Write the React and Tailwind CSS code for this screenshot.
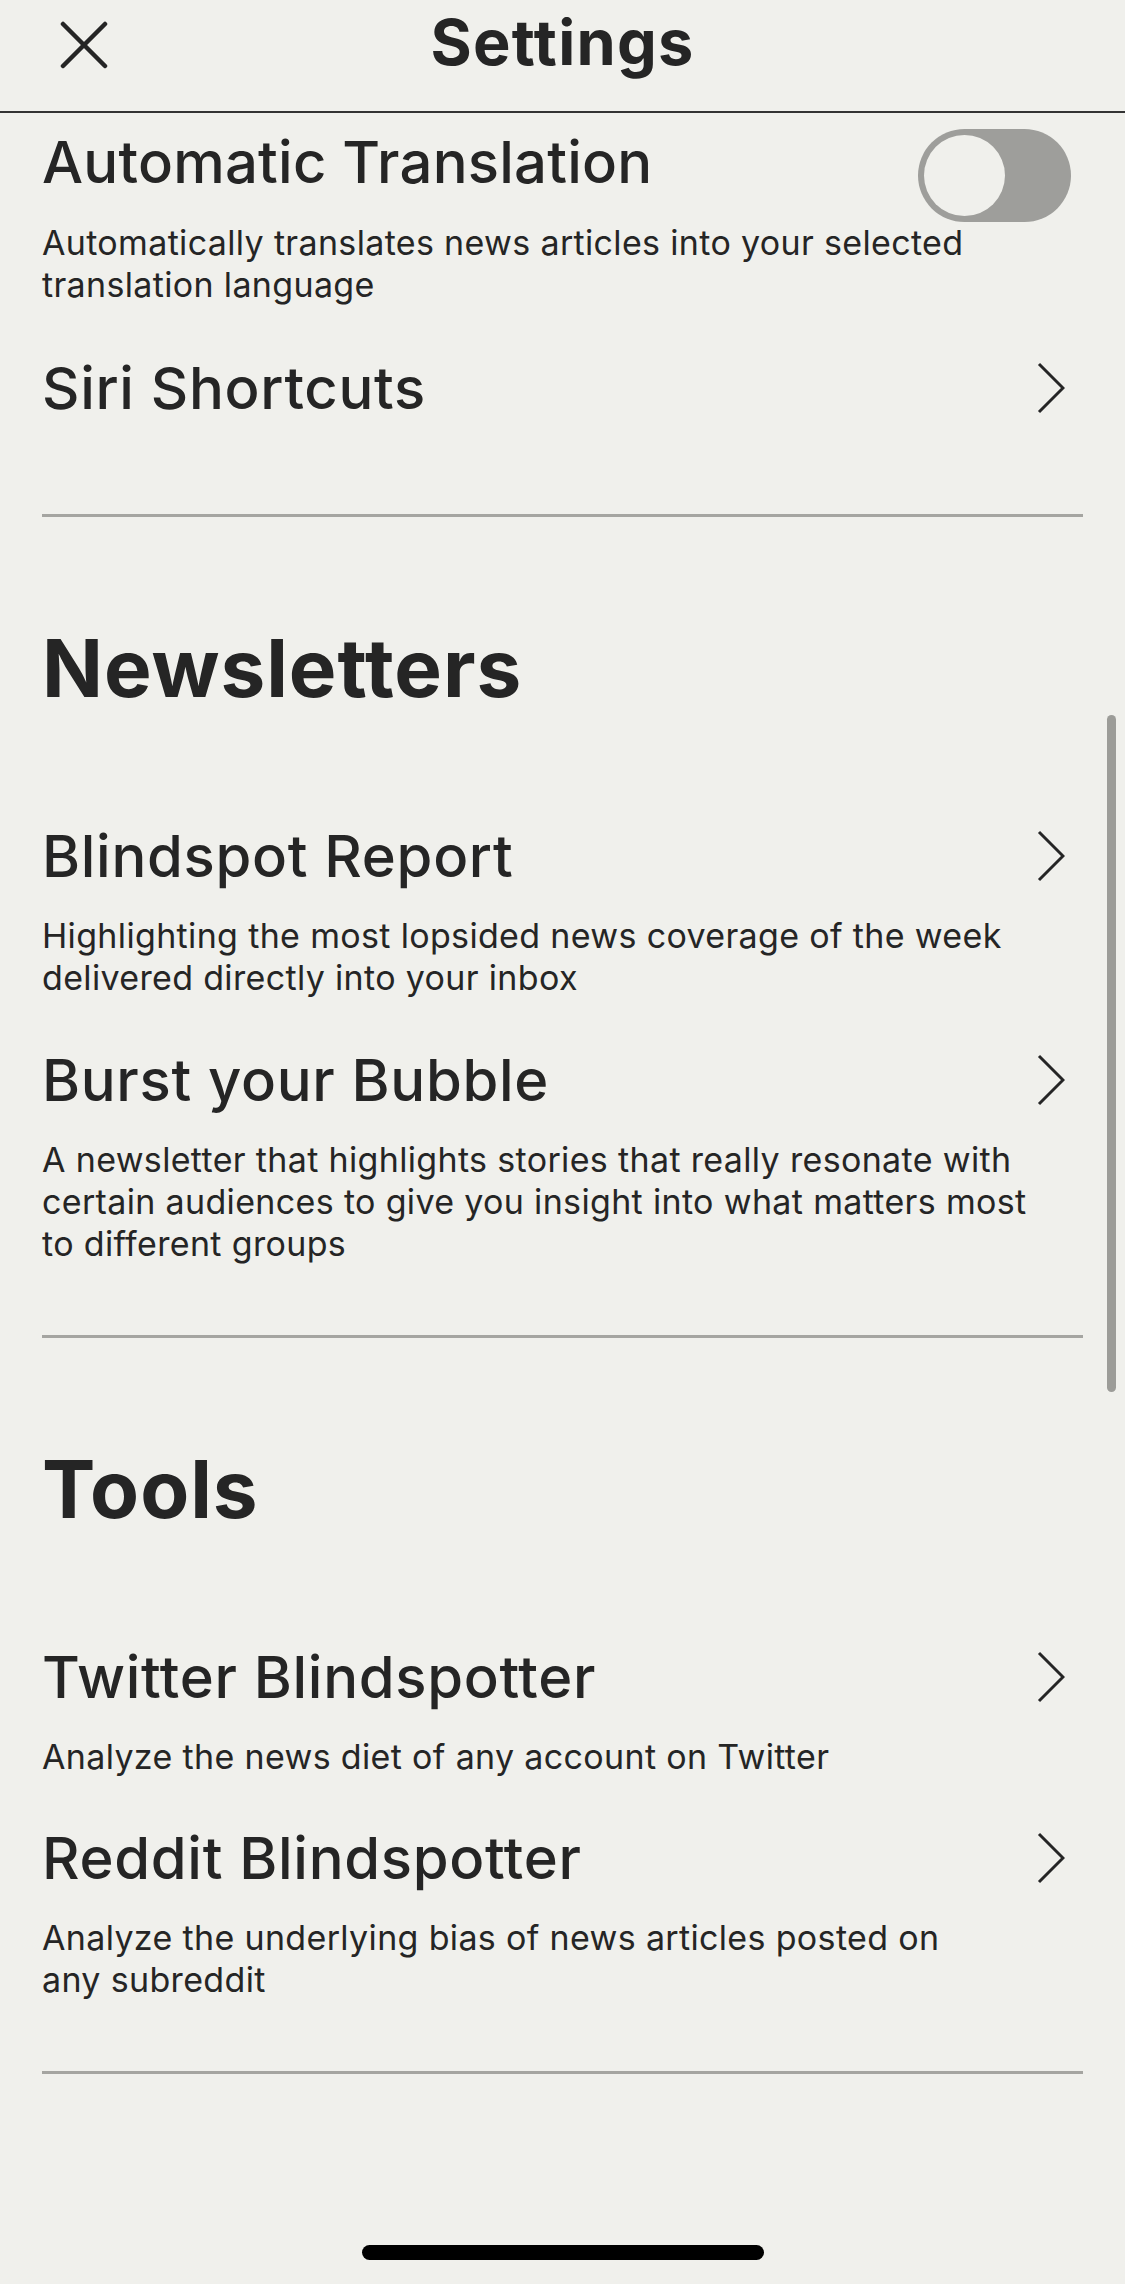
const font = { fontFamily: "Inter, 'Liberation Sans', sans-serif" }

function Chevron() {
  return (
    <svg width="28" height="52" viewBox="0 0 28 52" fill="none" className="mr-[18px] shrink-0">
      <polyline points="2,2 26,26 2,50" stroke="#252525" strokeWidth="3" strokeLinejoin="miter" />
    </svg>
  )
}

function CloseIcon() {
  return (
    <svg width="48" height="48" viewBox="0 0 48 48" fill="none">
      <line x1="3" y1="3" x2="45" y2="45" stroke="#252525" strokeWidth="4.5" strokeLinecap="round" />
      <line x1="45" y1="3" x2="3" y2="45" stroke="#252525" strokeWidth="4.5" strokeLinecap="round" />
    </svg>
  )
}

function Toggle() {
  return (
    <div className="mt-[2px] mr-[12px] w-[153px] h-[93px] rounded-full bg-[#9e9e9b] p-[6px] shrink-0">
      <div className="w-[81px] h-[81px] rounded-full bg-[#f0f0ec]" />
    </div>
  )
}

function Row({ title, lines, first, gap = "mt-[46px]" }) {
  return (
    <div className={first ? "mt-[105px]" : gap}>
      <div className="flex items-center justify-between">
        <h3 className="text-[58px] leading-[70px] font-medium tracking-[0.012em] text-[#252525]">{title}</h3>
        <Chevron />
      </div>
      {lines && (
        <p className="mt-[24px] text-[34px] leading-[42px] tracking-[0.01em] text-[#252525]">
          {lines.map((l) => (
            <span key={l} className="block whitespace-nowrap">
              {l}
            </span>
          ))}
        </p>
      )}
    </div>
  )
}

function Divider({ className }) {
  return <div className={"h-[3px] bg-[#a5a5a1] " + className} />
}

export default function App() {
  return (
    <div className="relative h-[2284px] overflow-hidden bg-[#f0f0ec] text-[#252525]" style={font}>
      <header className="grid grid-cols-[1fr_auto_1fr] h-[113px] border-b-2 border-[#333333]">
        <div className="pl-[60px] pt-[21px]">
          <CloseIcon />
        </div>
        <h1 className="pt-[11px] text-[63px] leading-[63px] font-bold tracking-[0.02em]">Settings</h1>
        <div />
      </header>

      <main className="px-[42px] pt-[14px]">
        <div className="flex items-start justify-between">
          <h3 className="text-[58px] leading-[70px] font-medium tracking-[0.004em]">Automatic Translation</h3>
          <Toggle />
        </div>
        <p className="text-[34px] leading-[42px] tracking-[0.01em]">
          <span className="block whitespace-nowrap">Automatically translates news articles into your selected</span>
          <span className="block whitespace-nowrap">translation language</span>
        </p>

        <div className="mt-[47px] flex items-center justify-between">
          <h3 className="text-[58px] leading-[70px] font-medium tracking-[0.012em]">Siri Shortcuts</h3>
          <Chevron />
        </div>

        <Divider className="mt-[91px]" />

        <h2 className="mt-[103px] text-[80px] leading-[96px] font-bold tracking-[0.012em]">Newsletters</h2>
        <Row
          first
          title="Blindspot Report"
          lines={["Highlighting the most lopsided news coverage of the week", "delivered directly into your inbox"]}
        />
        <Row
          title="Burst your Bubble"
          lines={[
            "A newsletter that highlights stories that really resonate with",
            "certain audiences to give you insight into what matters most",
            "to different groups",
          ]}
        />

        <Divider className="mt-[70px]" />

        <h2 className="mt-[103px] text-[80px] leading-[96px] font-bold tracking-[0.012em]">Tools</h2>
        <Row first title="Twitter Blindspotter" lines={["Analyze the news diet of any account on Twitter"]} />
        <Row
          gap="mt-[45px]"
          title="Reddit Blindspotter"
          lines={["Analyze the underlying bias of news articles posted on", "any subreddit"]}
        />

        <Divider className="mt-[70px]" />
      </main>

      {/* scroll indicator */}
      <div className="absolute left-[1107px] top-[715px] w-[9px] h-[677px] rounded-full bg-[#9c9c98]" />

      {/* home indicator */}
      <div className="absolute left-[362px] top-[2245px] w-[402px] h-[15px] rounded-full bg-black" />
    </div>
  )
}
